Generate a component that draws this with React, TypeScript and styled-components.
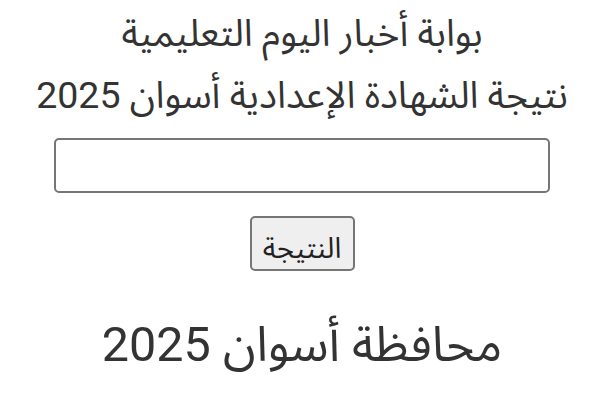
import * as React from "react";
import styled, { createGlobalStyle } from "styled-components";

const fontStack = `Roboto, "Noto Sans Arabic", sans-serif`;

const GlobalStyle = createGlobalStyle`
  html, body {
    margin: 0;
    padding: 0;
    background: #ffffff;
  }
  body {
    font-family: ${fontStack};
    color: #333333;
  }
`;

const Page = styled.div`
  direction: rtl;
  display: flex;
  flex-direction: column;
  align-items: center;
  padding: 2px 0 0 4px;
`;

const Title = styled.h1`
  margin: 0;
  font-weight: 400;
  font-size: 37.5px;
  line-height: 62px;
  text-align: center;
  color: #333333;
`;

const SearchForm = styled.form`
  width: 100%;
  display: flex;
  flex-direction: column;
  align-items: center;
  gap: 23px;
  margin-top: 12px;
`;

const Input = styled.input`
  box-sizing: border-box;
  width: 496px;
  height: 55px;
  border: 2px solid #767676;
  border-radius: 5px;
  background: #ffffff;
  font-size: 20px;
`;

const Button = styled.button`
  box-sizing: border-box;
  width: 105px;
  height: 55px;
  border: 2px solid #767676;
  border-radius: 5px;
  background: #efefef;
  color: #222222;
  font-family: ${fontStack};
  font-size: 29px;
  padding: 0 0 6px 0;
`;

const Province = styled.h2`
  margin: 44px 0 0 0;
  font-weight: 400;
  font-size: 48.5px;
  line-height: 60px;
  color: #333333;
`;

export default function App() {
  return (
    <>
      <GlobalStyle />
      <Page>
        <Title>بوابة أخبار اليوم التعليمية</Title>
        <Title>نتيجة الشهادة الإعدادية أسوان 2025</Title>
        <SearchForm onSubmit={(e) => e.preventDefault()}>
          <Input type="text" />
          <Button type="submit">النتيجة</Button>
        </SearchForm>
        <Province>محافظة أسوان 2025</Province>
      </Page>
    </>
  );
}
